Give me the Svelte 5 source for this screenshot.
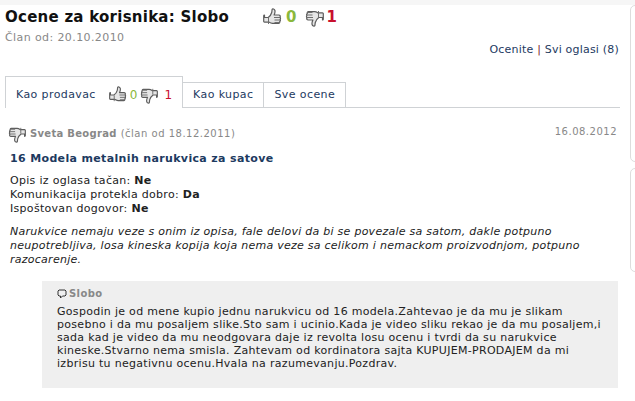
<script>
  const tabs = ['Kao kupac', 'Sve ocene'];
  const checks = [
    ['Opis iz oglasa tačan:', 'Ne'],
    ['Komunikacija protekla dobro:', 'Da'],
    ['Ispoštovan dogovor:', 'Ne']
  ];
  const thumb = 'M1.500 9.500h3.700c1.800-1.300 3-3 3.500-5 .3-1.100.2-2.300.5-3.200.4-.8 2.300-.4 2.700 1.200.4 1.600-.2 3.200-.8 4.500h4.700c1.400 0 1.800 1.300 1.200 2.200.7.6.7 1.600.1 2.200.5.7.3 1.600-.4 2 .3.9-.2 1.800-1.200 2H9.500c-1.300 0-2.500-.6-3.700-1.300H1.500c-.5 0-.8-.3-.8-.8v-5.500c0-.5.3-.8.8-.8z';
</script>

{#snippet hand(down, size)}
  <svg class="hand" class:down width={size} height={size} viewBox="0 0 19 19">
    <path d={thumb} fill="#e6e6e6" stroke="#5c5c5c" stroke-width="1.200" stroke-linejoin="round" />
    <path d="M5.500 10v6M11 9.500h6.500M11.500 12h5.800M11.500 14.500h5.200" fill="none" stroke="#6e6e6e" stroke-width="1" />
  </svg>
{/snippet}

<div class="page">
  <div class="strip"></div>
  <main>
    <header>
      <div class="headline">
        <h1>Ocene za korisnika: Slobo</h1>
        <div class="score big">
          {@render hand(false, 19)}
          <b class="up">0</b>
          {@render hand(true, 19)}
          <b class="no">1</b>
        </div>
      </div>
      <p class="since">Član od: 20.10.2010</p>
      <p class="links"><a href="#o">Ocenite</a> <i>|</i> <a href="#s">Svi oglasi (8)</a></p>
    </header>

    <nav>
      <a class="tab active" href="#p">
        Kao prodavac
        <span class="score">
          {@render hand(false, 18)}
          <span class="up">0</span>
          {@render hand(true, 18)}
          <span class="no">1</span>
        </span>
      </a>
      {#each tabs as t}
        <a class="tab" href="#t">{t}</a>
      {/each}
    </nav>

    <article>
      <div class="meta">
        <div class="who">
          {@render hand(true, 18)}
          <b>Sveta Beograd</b> <span>(član od 18.12.2011)</span>
        </div>
        <time>16.08.2012</time>
      </div>
      <h2>16 Modela metalnih narukvica za satove</h2>
      <ul>
        {#each checks as [label, value]}
          <li>{label} <b>{value}</b></li>
        {/each}
      </ul>
      <p class="comment">Narukvice nemaju veze s onim iz opisa, fale delovi da bi se povezale sa satom, dakle potpuno neupotrebljiva, losa kineska kopija koja nema veze sa celikom i nemackom proizvodnjom, potpuno razocarenje.</p>
      <div class="reply">
        <div class="author">
          <svg width="10" height="10" viewBox="0 0 10 10"><path d="M2 1h6l1 1v4l-1 1H5.500L3.500 9V7H2L1 6V2z" fill="none" stroke="#333" /></svg>
          <b>Slobo</b>
        </div>
        <p>Gospodin je od mene kupio jednu narukvicu od 16 modela.Zahtevao je da mu je slikam<br />posebno i da mu posaljem slike.Sto sam i ucinio.Kada je video sliku rekao je da mu posaljem,i<br />sada kad je video da mu neodgovara daje iz revolta losu ocenu i tvrdi da su narukvice<br />kineske.Stvarno nema smisla. Zahtevam od kordinatora sajta KUPUJEM-PRODAJEM da mi<br />izbrisu tu negativnu ocenu.Hvala na razumevanju.Pozdrav.</p>
      </div>
    </article>
  </main>
  <aside>
    <div class="panel one"></div>
    <div class="panel two"></div>
  </aside>
</div>

<style>
  :global(body) {
    margin: 0;
    background: #fff;
  }

  .page {
    width: 635px;
    height: 401px;
    overflow: hidden;
    display: grid;
    grid-template-columns: 620px 15px;
    grid-template-rows: 5px 1fr;
    font: 11px/14px "DejaVu Sans", Verdana, sans-serif;
    letter-spacing: 0.4px;
    color: #222;
  }

  .strip {
    grid-column: 1 / 3;
    background: #f6f6f6;
  }

  main {
    padding-left: 5px;
    min-width: 0;
  }

  a {
    color: #1d3a5f;
    text-decoration: none;
  }

  .headline {
    display: flex;
    align-items: center;
    height: 24px;
  }

  h1 {
    margin: 0;
    width: 258px;
    font-size: 15px;
    line-height: 24px;
    letter-spacing: 0.25px;
    color: #111;
  }

  .score {
    display: inline-flex;
    align-items: center;
  }

  .big {
    font-size: 15px;
    letter-spacing: 0;
    gap: 4px;
  }

  .big .up {
    margin-right: 5px;
  }

  .big .no {
    margin-left: -2px;
  }

  .up {
    color: #8ab83c;
  }

  .no {
    color: #c8102e;
  }

  .hand.down {
    transform: rotate(180deg);
  }

  .since {
    margin: 2px 0 0;
    color: #888;
  }

  .links {
    margin: -2px 0 0;
    padding: 0 1px 0 0;
    height: 20px;
    text-align: right;
    letter-spacing: 0.2px;
  }

  .links i {
    font-style: normal;
    color: #7a1f1f;
  }

  nav {
    margin-top: 13px;
    display: flex;
    align-items: flex-end;
    height: 31px;
    border-bottom: 1px solid #cfd2d5;
  }

  .tab {
    display: flex;
    align-items: center;
    height: 25px;
    padding: 0 10px;
    border: 1px solid #cfd2d5;
    border-bottom: 0;
    border-left: 0;
    box-sizing: border-box;
  }

  .tab.active {
    height: 32px;
    margin-bottom: -1px;
    padding: 4px 10px 0;
    background: #fff;
    border-left: 1px solid #cfd2d5;
  }

  .tab .score {
    margin-left: 13px;
    gap: 3px;
    font-size: 12px;
    letter-spacing: 0;
  }

  .tab .no {
    margin-left: 3px;
  }

  article {
    padding: 17px 0 0 5px;
  }

  .meta {
    display: flex;
    justify-content: space-between;
    padding-right: 3px;
    color: #888;
    font-size: 10px;
  }

  .who {
    display: flex;
    align-items: center;
    gap: 4px;
    margin-left: -2px;
  }

  .who b {
    letter-spacing: 0.3px;
  }

  .who span {
    white-space: pre;
    letter-spacing: 0.5px;
  }

  time {
    letter-spacing: 0.5px;
  }

  h2 {
    margin: 7px 0 0;
    font-size: 11px;
    line-height: 18px;
    letter-spacing: 0.35px;
    color: #1d3a5f;
  }

  ul {
    list-style: none;
    margin: 6px 0 0;
    padding: 0;
    letter-spacing: 0.3px;
  }

  .comment {
    margin: 9px 0 0;
    width: 606px;
    font-style: italic;
    letter-spacing: 0.26px;
  }

  .reply {
    margin: 14px 0 0 32px;
    width: 576px;
    height: 107px;
    box-sizing: border-box;
    padding: 6px 15px;
    background: #efefef;
  }

  .author {
    display: flex;
    align-items: center;
    gap: 2px;
    font-size: 10px;
    color: #888;
  }

  .reply p {
    margin: 4px 0 0;
    line-height: 13px;
    letter-spacing: 0.3px;
    white-space: nowrap;
  }

  aside {
    display: flex;
    flex-direction: column;
    gap: 6px;
    padding-left: 10px;
  }

  .panel {
    width: 20px;
    border: 1px solid #ddd;
    border-radius: 5px;
    box-sizing: border-box;
  }

  .one {
    height: 157px;
  }

  .two {
    height: 104px;
  }
</style>
